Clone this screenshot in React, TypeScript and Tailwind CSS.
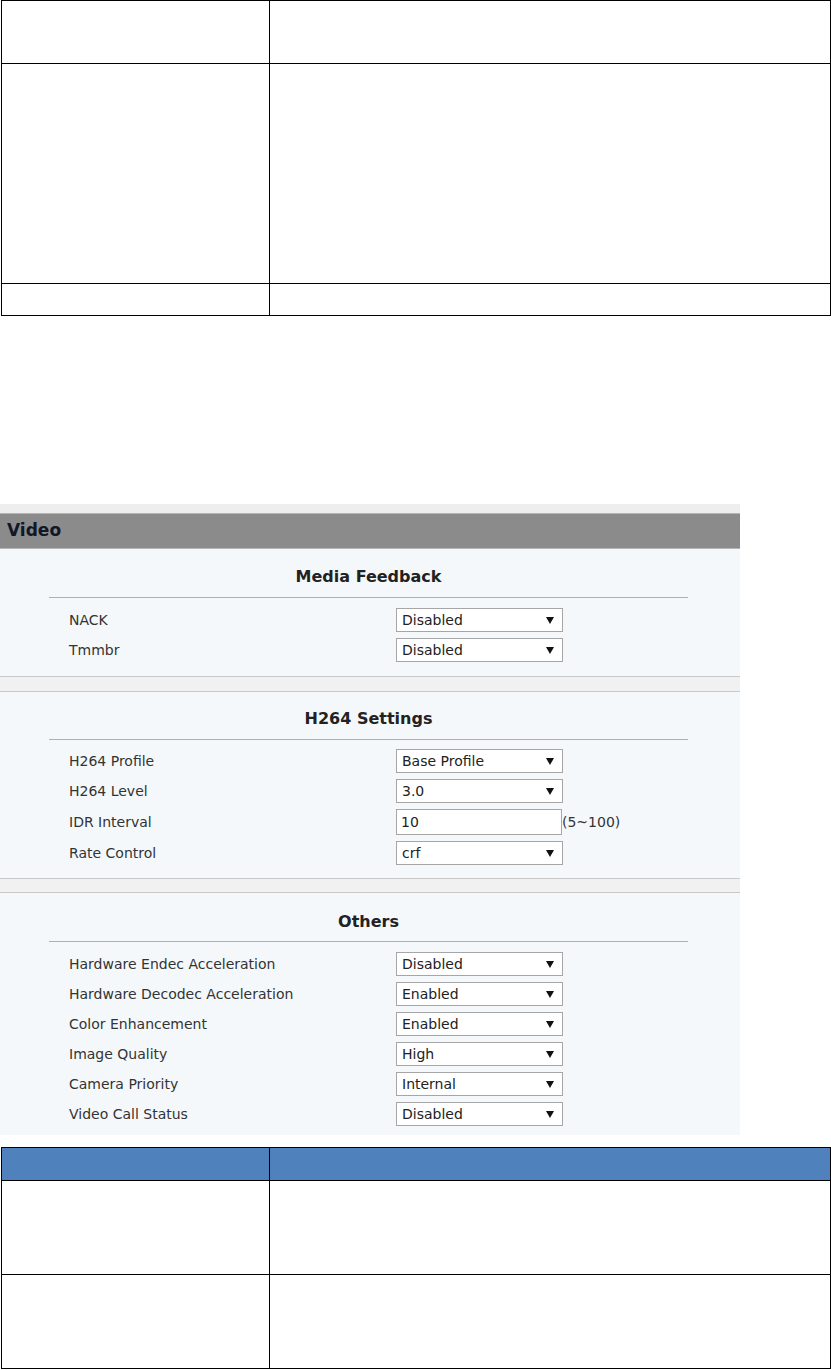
import React from "react";

type Row =
  | { label: string; kind: "select"; value: string }
  | { label: string; kind: "input"; value: string; hint: string };

type Section = {
  title: string;
  rows: Row[];
  // spacing tweaks per section, as they sit in the capture
  wrap: string;
  head: string;
  body: string;
};

const sections: Section[] = [
  {
    title: "Media Feedback",
    wrap: "border-b border-[#c8c8c8]",
    head: "h-[48px] pt-[8px]",
    body: "pt-[10px] pb-[14px]",
    rows: [
      { label: "NACK", kind: "select", value: "Disabled" },
      { label: "Tmmbr", kind: "select", value: "Disabled" },
    ],
  },
  {
    title: "H264 Settings",
    wrap: "border-y border-[#c8c8c8] mt-[14px]",
    head: "h-[47px] pt-[6px]",
    body: "pt-[9px] pb-[13px]",
    rows: [
      { label: "H264 Profile", kind: "select", value: "Base Profile" },
      { label: "H264 Level", kind: "select", value: "3.0" },
      { label: "IDR Interval", kind: "input", value: "10", hint: "(5~100)" },
      { label: "Rate Control", kind: "select", value: "crf" },
    ],
  },
  {
    title: "Others",
    wrap: "border-t border-[#c8c8c8] mt-[13px]",
    head: "h-[48px] pt-[9px]",
    body: "pt-[10px] pb-[9px]",
    rows: [
      { label: "Hardware Endec Acceleration", kind: "select", value: "Disabled" },
      { label: "Hardware Decodec Acceleration", kind: "select", value: "Enabled" },
      { label: "Color Enhancement", kind: "select", value: "Enabled" },
      { label: "Image Quality", kind: "select", value: "High" },
      { label: "Camera Priority", kind: "select", value: "Internal" },
      { label: "Video Call Status", kind: "select", value: "Disabled" },
    ],
  },
];

function Arrow() {
  return (
    <svg width="8" height="7" viewBox="0 0 8 7" className="shrink-0">
      <path d="M0 0 H8 L4 7 Z" fill="#111" />
    </svg>
  );
}

function Select({ value }: { value: string }) {
  return (
    <div className="flex h-[24px] w-[167px] items-center justify-between border border-[#a6a6a6] bg-white pl-[5px] pr-[8px] text-[14px] text-[#222]">
      <span>{value}</span>
      <Arrow />
    </div>
  );
}

function Field({ row }: { row: Row }) {
  return (
    <div className="flex items-center">
      <span className="w-[347px] pl-[20px] text-[14px] text-[#333]">{row.label}</span>
      {row.kind === "select" ? (
        <Select value={row.value} />
      ) : (
        <>
          <div className="flex h-[26px] w-[166px] items-center border border-[#a6a6a6] bg-white pl-[4px] text-[14px] text-[#222]">
            {row.value}
          </div>
          <span className="text-[14px] text-[#333]">{row.hint}</span>
        </>
      )}
    </div>
  );
}

function VideoPanel() {
  return (
    <div className="w-[740px] bg-[#f1f1f1] font-['DejaVu_Sans',sans-serif]">
      <div className="h-[10px] border-t border-white bg-[#eeeeee]" />
      <div className="flex h-[36px] items-center border-y border-[#b5b5b5] bg-[#8b8b8b] pl-[7px] text-[17px] font-bold text-[#111827]">
        Video
      </div>
      {sections.map((s) => (
        <div key={s.title} className={`bg-[#f5f8fb] ${s.wrap}`}>
          <div className="ml-[49px] w-[639px]">
            <div className={`flex items-center justify-center text-[16px] font-bold text-[#222] ${s.head}`}>
              {s.title}
            </div>
            <div className="border-t border-[#aab0bc]" />
            <div className={`flex flex-col gap-[6px] ${s.body}`}>
              {s.rows.map((r) => (
                <Field key={r.label} row={r} />
              ))}
            </div>
          </div>
        </div>
      ))}
    </div>
  );
}

export default function App() {
  return (
    <div className="h-[1370px] w-[831px] overflow-hidden bg-white">
      <table className="ml-[1px] w-[830px] border-collapse">
        <tbody>
          <tr className="h-[63px]">
            <td className="w-[268px] border border-black" />
            <td className="border border-black" />
          </tr>
          <tr className="h-[220px]">
            <td className="border border-black" />
            <td className="border border-black" />
          </tr>
          <tr className="h-[32px]">
            <td className="border border-black" />
            <td className="border border-black" />
          </tr>
        </tbody>
      </table>

      <div className="mt-[187px]">
        <VideoPanel />
      </div>

      <table className="mt-[12px] ml-[1px] w-[830px] border-collapse">
        <tbody>
          <tr className="h-[33px] bg-[#4f81bd]">
            <td className="w-[268px] border border-black" />
            <td className="border border-black" />
          </tr>
          <tr className="h-[94px]">
            <td className="border border-black" />
            <td className="border border-black" />
          </tr>
          <tr className="h-[94px]">
            <td className="border border-black" />
            <td className="border border-black" />
          </tr>
        </tbody>
      </table>
    </div>
  );
}
